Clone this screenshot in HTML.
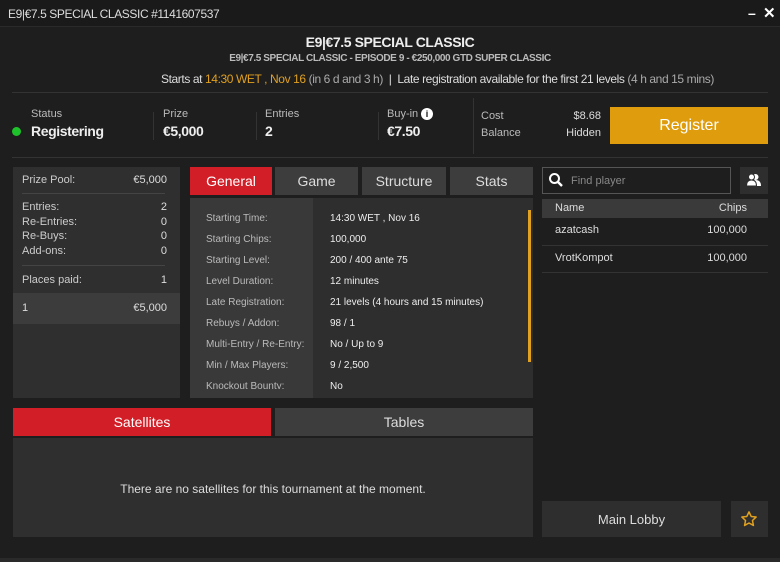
<!DOCTYPE html>
<html><head><meta charset="utf-8"><style>
*{margin:0;padding:0;box-sizing:border-box}
body{width:780px;height:562px;background:#1e1e1e;font-family:"Liberation Sans",sans-serif;color:#ddd;position:relative;overflow:hidden}
.a{position:absolute;white-space:nowrap}
.n{letter-spacing:-0.4px}
.pn{background:#2f2f2f}
.tab{position:absolute;background:#3d3d3d;color:#ddd;font-size:14px;text-align:center;line-height:28px}
.red{background:#d21f27;color:#fff}
.lbl{font-size:10px;color:#bbb}
.v{font-size:10px;color:#eee}
</style></head><body>
<div class="a" style="left:0;top:0;width:780px;height:27px;background:#1a1a1a;border-bottom:1px solid #2a2a2a"></div>
<div class="a n" style="left:8px;top:7px;font-size:12px;color:#ddd">E9|€7.5 SPECIAL CLASSIC #1141607537</div>
<div class="a" style="left:748px;top:5px;font-size:14px;color:#fff;font-weight:bold">–</div>
<div class="a" style="left:763px;top:4px;font-size:15px;color:#fff;font-weight:bold">✕</div>

<div class="a n" style="left:0;width:780px;text-align:center;top:34px;font-size:14px;font-weight:bold;color:#eee">E9|€7.5 SPECIAL CLASSIC</div>
<div class="a n" style="left:0;width:780px;text-align:center;top:53px;font-size:10px;font-weight:bold;color:#bbb">E9|€7.5 SPECIAL CLASSIC - EPISODE 9 - €250,000 GTD SUPER CLASSIC</div>
<div class="a n" style="left:161px;top:72px;font-size:12px;color:#ddd">Starts at <span style="color:#e0a020">14:30 WET , Nov 16</span> <span style="color:#aaa">(in 6 d and 3 h)</span> &nbsp;| &nbsp;Late registration available for the first 21 levels <span style="color:#aaa">(4 h and 15 mins)</span></div>
<div class="a" style="left:12px;top:92px;width:756px;height:1px;background:#333"></div>

<div class="a" style="left:31px;top:108px;font-size:11px;color:#bbb">Status</div>
<div class="a" style="left:12px;top:127px;width:9px;height:9px;border-radius:50%;background:#1ec22a"></div>
<div class="a n" style="left:31px;top:123px;font-size:14px;font-weight:bold;color:#eee">Registering</div>
<div class="a" style="left:153px;top:112px;width:1px;height:28px;background:#333"></div>
<div class="a" style="left:163px;top:108px;font-size:11px;color:#bbb">Prize</div>
<div class="a n" style="left:163px;top:123px;font-size:14px;font-weight:bold;color:#eee">€5,000</div>
<div class="a" style="left:256px;top:112px;width:1px;height:28px;background:#333"></div>
<div class="a" style="left:265px;top:108px;font-size:11px;color:#bbb">Entries</div>
<div class="a n" style="left:265px;top:123px;font-size:14px;font-weight:bold;color:#eee">2</div>
<div class="a" style="left:378px;top:112px;width:1px;height:28px;background:#333"></div>
<div class="a" style="left:387px;top:108px;font-size:11px;color:#bbb">Buy-in</div>
<div class="a" style="left:421px;top:108px;width:12px;height:12px;border-radius:50%;background:#fff;color:#111;font-size:9px;font-weight:bold;text-align:center;line-height:12px">i</div>
<div class="a n" style="left:387px;top:123px;font-size:14px;font-weight:bold;color:#eee">€7.50</div>
<div class="a" style="left:473px;top:98px;width:1px;height:56px;background:#333"></div>
<div class="a" style="left:481px;top:110px;font-size:11px;color:#bbb">Cost</div>
<div class="a" style="left:481px;top:127px;font-size:11px;color:#bbb">Balance</div>
<div class="a" style="left:540px;width:61px;text-align:right;top:110px;font-size:11px;color:#ddd">$8.68</div>
<div class="a" style="left:540px;width:61px;text-align:right;top:127px;font-size:11px;color:#ddd">Hidden</div>
<div class="a" style="left:610px;top:107px;width:158px;height:37px;background:#df9c0c;color:#fff;font-size:16px;text-align:center;line-height:37px">Register</div>
<div class="a" style="left:12px;top:157px;width:756px;height:1px;background:#333"></div>

<!-- left panel -->
<div class="a pn" style="left:13px;top:167px;width:167px;height:231px"></div>
<div class="a" style="left:22px;top:174px;font-size:11px;color:#ccc">Prize Pool:</div>
<div class="a" style="left:100px;width:67px;text-align:right;top:174px;font-size:11px;color:#ddd">€5,000</div>
<div class="a" style="left:22px;top:193px;width:143px;height:1px;background:#444"></div>
<div class="a" style="left:22px;top:200px;font-size:11px;color:#ccc;line-height:14.7px">Entries:<br>Re-Entries:<br>Re-Buys:<br>Add-ons:</div>
<div class="a" style="left:100px;width:67px;text-align:right;top:200px;font-size:11px;color:#ddd;line-height:14.7px">2<br>0<br>0<br>0</div>
<div class="a" style="left:22px;top:265px;width:143px;height:1px;background:#444"></div>
<div class="a" style="left:22px;top:274px;font-size:11px;color:#ccc">Places paid:</div>
<div class="a" style="left:100px;width:67px;text-align:right;top:274px;font-size:11px;color:#ddd">1</div>
<div class="a" style="left:13px;top:293px;width:167px;height:31px;background:#3c3c3c"></div>
<div class="a" style="left:22px;top:302px;font-size:11px;color:#ddd">1</div>
<div class="a" style="left:100px;width:67px;text-align:right;top:302px;font-size:11px;color:#ddd">€5,000</div>

<!-- tabs -->
<div class="tab red" style="left:190px;top:167px;width:82px">General</div>
<div class="tab" style="left:275px;top:167px;width:83px">Game</div>
<div class="tab" style="left:362px;top:167px;width:84px">Structure</div>
<div class="tab" style="left:450px;top:167px;width:83px">Stats</div>
<div class="a" style="left:190px;top:198px;width:343px;height:200px;background:#2e2e2e;overflow:hidden">
 <div class="a" style="left:0;top:0;width:123px;height:200px;background:#393939"></div>
 <div class="a" style="left:0;top:0;width:343px;height:191px;overflow:hidden">
 <div class="a lbl" style="left:16px;top:10px;line-height:21px">Starting Time:<br>Starting Chips:<br>Starting Level:<br>Level Duration:<br>Late Registration:<br>Rebuys / Addon:<br>Multi-Entry / Re-Entry:<br>Min / Max Players:<br>Knockout Bounty:</div>
 <div class="a v" style="left:140px;top:10px;line-height:21px">14:30 WET , Nov 16<br>100,000<br>200 / 400 ante 75<br>12 minutes<br>21 levels (4 hours and 15 minutes)<br>98 / 1<br>No / Up to 9<br>9 / 2,500<br>No</div>
 </div>
 <div class="a" style="left:338px;top:12px;width:3px;height:152px;background:#e0a020"></div>
</div>

<div class="tab red" style="left:13px;top:408px;width:258px;height:28px">Satellites</div>
<div class="tab" style="left:275px;top:408px;width:258px;height:28px">Tables</div>
<div class="a pn" style="left:13px;top:438px;width:520px;height:99px"></div>
<div class="a" style="left:13px;width:520px;text-align:center;top:482px;font-size:12px;color:#ddd">There are no satellites for this tournament at the moment.</div>

<!-- right -->
<div class="a" style="left:542px;top:167px;width:189px;height:27px;border:1px solid #555;background:#1e1e1e"></div>
<svg class="a" style="left:548px;top:172px" width="16" height="16" viewBox="0 0 16 16"><circle cx="6.5" cy="6.5" r="4.5" fill="none" stroke="#fff" stroke-width="2"/><path d="M10 10 L14 14" stroke="#fff" stroke-width="2.4"/></svg>
<div class="a" style="left:571px;top:175px;font-size:11px;color:#888">Find player</div>
<div class="a" style="left:740px;top:167px;width:28px;height:27px;background:#2e2e2e"></div>
<svg class="a" style="left:746px;top:173px" width="16" height="14" viewBox="0 0 16 14"><circle cx="9.5" cy="4" r="3" fill="#fff"/><path d="M4 13 Q4 7 9.5 7 Q15 7 15 13Z" fill="#fff"/><circle cx="5.5" cy="4" r="3" fill="#fff" stroke="#2e2e2e" stroke-width="1"/><path d="M0.5 13 Q0.5 7 5.5 7 Q10.5 7 10.5 13Z" fill="#fff" stroke="#2e2e2e" stroke-width="1"/></svg>
<div class="a" style="left:542px;top:199px;width:226px;height:19px;background:#3a3a3a"></div>
<div class="a" style="left:555px;top:202px;font-size:11px;color:#ddd">Name</div>
<div class="a" style="left:700px;width:47px;text-align:right;top:202px;font-size:11px;color:#ddd">Chips</div>
<div class="a" style="left:555px;top:224px;font-size:11px;color:#ddd">azatcash</div>
<div class="a" style="left:680px;width:67px;text-align:right;top:224px;font-size:11px;color:#ddd">100,000</div>
<div class="a" style="left:542px;top:245px;width:226px;height:1px;background:#333"></div>
<div class="a" style="left:555px;top:252px;font-size:11px;color:#ddd">VrotKompot</div>
<div class="a" style="left:680px;width:67px;text-align:right;top:252px;font-size:11px;color:#ddd">100,000</div>
<div class="a" style="left:542px;top:272px;width:226px;height:1px;background:#333"></div>
<div class="a" style="left:542px;top:501px;width:179px;height:36px;background:#2e2e2e;color:#ddd;font-size:13px;text-align:center;line-height:37px">Main Lobby</div>
<div class="a" style="left:731px;top:501px;width:37px;height:36px;background:#2e2e2e"></div>
<svg class="a" style="left:740px;top:510px" width="18" height="18" viewBox="0 0 24 24"><path d="M12 2.5l2.9 6.1 6.6.8-4.9 4.6 1.3 6.6L12 17.3l-5.9 3.3 1.3-6.6-4.9-4.6 6.6-.8z" fill="none" stroke="#e0a020" stroke-width="2" stroke-linejoin="round"/></svg>
<div class="a" style="left:0;top:558px;width:780px;height:4px;background:#2a2a2a"></div>
</body></html>
